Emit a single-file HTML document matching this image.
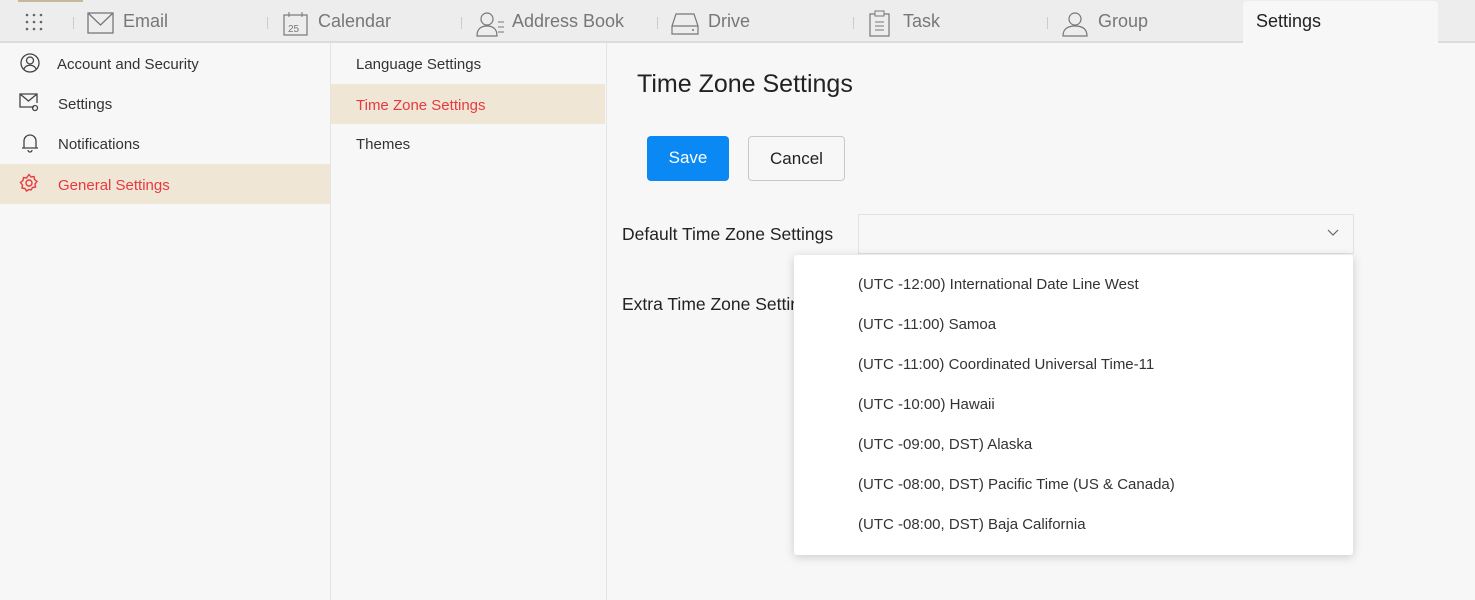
<!DOCTYPE html>
<html><head><meta charset="utf-8"><style>
*{box-sizing:border-box;margin:0;padding:0}
body{width:1475px;height:600px;overflow:hidden;background:#f7f7f7;font-family:"Liberation Sans",sans-serif;position:relative;color:#333}
.top{position:absolute;left:0;top:0;width:1475px;height:43px;background:#ededed;border-bottom:2px solid #dcdcdc}
.tab{position:absolute;top:11px;font-size:18px;color:#777}
.sep{position:absolute;top:17px;width:1px;height:12px;background:#ccc}
.act{position:absolute;left:1243px;top:1px;width:195px;height:42px;background:#f7f7f7;border-radius:4px 4px 0 0}
.col1{position:absolute;left:0;top:43px;width:331px;height:557px;border-right:1px solid #e4e4e4}
.col2{position:absolute;left:331px;top:43px;width:276px;height:557px;border-right:1px solid #e4e4e4}
.it{position:absolute;left:0;width:100%;height:40px;font-size:15px;color:#333}
.it span{position:absolute;top:13px}
.sel{background:#efe6d6;color:#e8393e}
svg{position:absolute}
.btn{position:absolute;top:136px;height:45px;border-radius:4px;font-size:17px;text-align:center;line-height:43px}
.opt{position:absolute;left:858px;font-size:15px;color:#333}
</style></head><body>
<div class="top">
<div style="position:absolute;left:18px;top:0;width:65px;height:2px;background:#c8b89a"></div>
<svg style="left:24px;top:12px" width="20" height="20"><g fill="#666"><circle cx="3" cy="3" r="1.3"/><circle cx="10" cy="3" r="1.3"/><circle cx="17" cy="3" r="1.3"/><circle cx="3" cy="10" r="1.3"/><circle cx="10" cy="10" r="1.3"/><circle cx="17" cy="10" r="1.3"/><circle cx="3" cy="17" r="1.3"/><circle cx="10" cy="17" r="1.3"/><circle cx="17" cy="17" r="1.3"/></g></svg>
<div class="sep" style="left:73px"></div>
<svg style="left:87px;top:12px" width="27" height="22"><rect x="1" y="1" width="25" height="20" fill="none" stroke="#777" stroke-width="1.3"/><path d="M1 1 L13.5 13 L26 1" fill="none" stroke="#777" stroke-width="1.3"/></svg>
<div class="tab" style="left:123px">Email</div>
<div class="sep" style="left:267px"></div>
<svg style="left:283px;top:12px" width="25" height="24"><rect x="1" y="3" width="23" height="20" fill="none" stroke="#777" stroke-width="1.2"/><path d="M6 0v5M19 0v5" stroke="#777"/><text x="5" y="20" font-size="10" fill="#777" font-family="Liberation Sans">25</text></svg>
<div class="tab" style="left:318px">Calendar</div>
<div class="sep" style="left:461px"></div>
<svg style="left:476px;top:11px" width="30" height="26"><circle cx="11" cy="8" r="6" fill="none" stroke="#777" stroke-width="1.2"/><path d="M1 25 C1 17 6 15 11 15 C16 15 21 17 21 25Z" fill="none" stroke="#777" stroke-width="1.2"/><path d="M22 11h6M22 16h6M22 21h6" stroke="#777"/></svg>
<div class="tab" style="left:512px">Address Book</div>
<div class="sep" style="left:657px"></div>
<svg style="left:671px;top:12px" width="28" height="24"><path d="M1 14 L5 2 H23 L27 14 V22 H1Z M1 14 H27" fill="none" stroke="#777" stroke-width="1.2"/><circle cx="22" cy="18" r="1" fill="#777"/></svg>
<div class="tab" style="left:708px">Drive</div>
<div class="sep" style="left:853px"></div>
<svg style="left:869px;top:10px" width="22" height="27"><rect x="1" y="4" width="19" height="22" fill="none" stroke="#777" stroke-width="1.2"/><rect x="6" y="1" width="9" height="5" fill="#ededed" stroke="#777"/><path d="M6 12h9M6 16h9M6 20h9" stroke="#777"/></svg>
<div class="tab" style="left:903px">Task</div>
<div class="sep" style="left:1047px"></div>
<svg style="left:1061px;top:11px" width="30" height="26"><circle cx="14" cy="8" r="6" fill="none" stroke="#777" stroke-width="1.2"/><path d="M2 25 C2 17 8 15 14 15 C20 15 26 17 26 25Z" fill="none" stroke="#777" stroke-width="1.2"/></svg>
<div class="tab" style="left:1098px">Group</div>
<div class="act"></div>
<div class="tab" style="left:1256px;color:#222">Settings</div>
</div>

<div class="col1">
<div class="it" style="top:0"><svg style="left:20px;top:10px" width="20" height="20"><circle cx="10" cy="10" r="9" fill="none" stroke="#444" stroke-width="1.3"/><circle cx="10" cy="7.5" r="3.5" fill="none" stroke="#444" stroke-width="1.3"/><path d="M4 16 C6 11 14 11 16 16" fill="none" stroke="#444" stroke-width="1.3"/></svg><span style="left:57px">Account and Security</span></div>
<div class="it" style="top:40px"><svg style="left:19px;top:10px" width="22" height="20"><path d="M15 14H1V1h17v9" fill="none" stroke="#444" stroke-width="1.3"/><path d="M1 1l8.5 7L18 1" fill="none" stroke="#444" stroke-width="1.3"/><circle cx="16" cy="15" r="2.5" fill="none" stroke="#444" stroke-width="1.3"/></svg><span style="left:58px">Settings</span></div>
<div class="it" style="top:80px"><svg style="left:20px;top:10px" width="20" height="20"><path d="M4 15V8a6 6 0 0 1 12 0v7h2H2z" fill="none" stroke="#444" stroke-width="1.3"/><path d="M8 17a2 2 0 0 0 4 0" fill="none" stroke="#444" stroke-width="1.3"/></svg><span style="left:58px">Notifications</span></div>
<div class="it sel" style="top:121px"><svg style="left:19px;top:9px" width="20" height="20"><circle cx="10" cy="10" r="3" fill="none" stroke="#e8393e" stroke-width="1.4"/><path d="M10 1.5l2 2.5 3-.5.5 3 2.5 2-2 2.5.5 3-3 .5-1.5 2.5L10 16.5 7.5 18 6 15.5l-3-.5.5-3L1.5 9.5 4 7.5l.5-3 3 .5z" fill="none" stroke="#e8393e" stroke-width="1.4"/></svg><span style="left:58px">General Settings</span></div>
</div>

<div class="col2">
<div class="it" style="top:0"><span style="left:25px">Language Settings</span></div>
<div class="it sel" style="top:41px;width:274px"><span style="left:25px">Time Zone Settings</span></div>
<div class="it" style="top:80px"><span style="left:25px">Themes</span></div>
</div>

<div style="position:absolute;left:637px;top:70px;font-size:25px;color:#222">Time Zone Settings</div>
<div class="btn" style="left:647px;width:82px;background:#0a88f4;color:#fff">Save</div>
<div class="btn" style="left:748px;width:97px;border:1px solid #c8c8c8;color:#222;background:#f7f7f7">Cancel</div>
<div style="position:absolute;left:622px;top:224px;font-size:17.5px;color:#222">Default Time Zone Settings</div>
<div style="position:absolute;left:858px;top:214px;width:496px;height:40px;border:1px solid #e2e2e2;background:#f7f7f7"></div>
<svg style="left:1327px;top:228px" width="12" height="10"><path d="M1 2l5 5 5-5" fill="none" stroke="#666" stroke-width="1.2"/></svg>
<div style="position:absolute;left:622px;top:294px;font-size:17.5px;color:#222">Extra Time Zone Settings</div>
<div style="position:absolute;left:794px;top:255px;width:559px;height:300px;background:#fff;border-radius:3px;box-shadow:0 2px 10px rgba(0,0,0,.18)"></div>
<div class="opt" style="top:276px">(UTC -12:00) International Date Line West</div>
<div class="opt" style="top:316px">(UTC -11:00) Samoa</div>
<div class="opt" style="top:356px">(UTC -11:00) Coordinated Universal Time-11</div>
<div class="opt" style="top:396px">(UTC -10:00) Hawaii</div>
<div class="opt" style="top:436px">(UTC -09:00, DST) Alaska</div>
<div class="opt" style="top:476px">(UTC -08:00, DST) Pacific Time (US &amp; Canada)</div>
<div class="opt" style="top:516px">(UTC -08:00, DST) Baja California</div>
</body></html>
